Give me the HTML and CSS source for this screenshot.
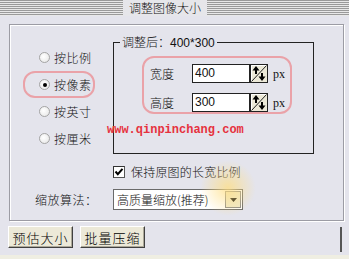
FILE: index.html
```html
<!DOCTYPE html>
<html lang="zh">
<head>
    <meta charset="UTF-8">
    <title>调整图像大小</title>
    <link rel="stylesheet" href="styles.css">
</head>
<body>
    <div class="titlebar"><span class="title">调整图像大小</span></div>

    <div class="panel">
        <div class="panel-top">
            <div class="modes">
                <label class="mode"><span class="radio"></span>按比例</label>
                <label class="mode picked"><span class="radio on"></span>按像素</label>
                <label class="mode"><span class="radio"></span>按英寸</label>
                <label class="mode"><span class="radio"></span>按厘米</label>
            </div>

            <div class="resize-box">
                <span class="legend">调整后：<span class="num">400*300</span></span>
                <div class="dims">
                    <div class="dim-row">
                        <span class="dim-label">宽度</span>
                        <span class="field">400</span>
                        <svg class="spin" width="18" height="19" viewBox="0 0 18 19">
                            <rect x="0.5" y="0.5" width="17" height="18" fill="#ece9d8" stroke="#222"/>
                            <path d="M1.5 17.5 V1.5 H16.5" fill="none" stroke="#fff"/>
                            <line x1="1.5" y1="17.5" x2="16.5" y2="1.5" stroke="#222"/>
                            <path d="M6 2 L2.5 6.5 H5 V10 H7 V6.5 H9.5 Z" fill="#000"/>
                            <path d="M12 17 L8.5 12.5 H11 V9 H13 V12.5 H15.5 Z" fill="#000"/>
                        </svg>
                        <span class="unit">px</span>
                    </div>
                    <div class="dim-row">
                        <span class="dim-label">高度</span>
                        <span class="field">300</span>
                        <svg class="spin" width="18" height="19" viewBox="0 0 18 19">
                            <rect x="0.5" y="0.5" width="17" height="18" fill="#ece9d8" stroke="#222"/>
                            <path d="M1.5 17.5 V1.5 H16.5" fill="none" stroke="#fff"/>
                            <line x1="1.5" y1="17.5" x2="16.5" y2="1.5" stroke="#222"/>
                            <path d="M6 2 L2.5 6.5 H5 V10 H7 V6.5 H9.5 Z" fill="#000"/>
                            <path d="M12 17 L8.5 12.5 H11 V9 H13 V12.5 H15.5 Z" fill="#000"/>
                        </svg>
                        <span class="unit">px</span>
                    </div>
                </div>
                <div class="watermark">www.qinpinchang.com</div>
            </div>
        </div>

        <div class="keep-row">
            <svg class="check" width="12" height="12" viewBox="0 0 12 12">
                <rect x="0.5" y="0.5" width="11" height="11" fill="#fff" stroke="#555"/>
                <path d="M0.5 11.5 V0.5 H11.5" fill="none" stroke="#333"/>
                <path d="M2.5 5.5 L4.8 8.2 L9.5 2.8" fill="none" stroke="#000" stroke-width="2"/>
            </svg>
            <span>保持原图的长宽比例</span>
        </div>

        <div class="algo-row">
            <span class="algo-label">缩放算法：</span>
            <div class="select">
                <span class="select-text">高质量缩放(推荐)</span>
                <span class="select-btn">
                    <svg width="7" height="4" viewBox="0 0 7 4"><path d="M0 0 H7 L3.5 4 Z" fill="#000"/></svg>
                </span>
            </div>
        </div>
    </div>

    <div class="footer">
        <button class="btn">预估大小</button>
        <button class="btn">批量压缩</button>
        <span class="sep"></span>
    </div>
    <div class="statusbar"></div>
</body>
</html>
```

FILE: styles.css
```css
body {
    margin: 0;
    width: 349px;
    height: 259px;
    overflow: hidden;
    background: #e4e4ec;
    font-family: "Noto Sans CJK SC", sans-serif;
    font-size: 12px;
    font-weight: 300;
    line-height: 14px;
    color: #111;
}
.titlebar {
    height: 16px;
    padding-left: 123px;
    background: repeating-linear-gradient(to bottom, #9a9a9a 0 1px, #e8e8e8 1px 2px);
}
.title {
    display: block;
    width: 84px;
    height: 16px;
    line-height: 16px;
    text-align: center;
    background: #e6e6ea;
}
.panel {
    margin: 8px 5px 0 9px;
    height: 197px;
    box-sizing: border-box;
    border: 1px solid #9c9ca4;
    box-shadow: inset 1px 1px #fff, 1px 1px #fff;
}
.panel-top {
    display: flex;
}
.modes {
    width: 103px;
    box-sizing: border-box;
    padding: 19px 0 0 29px;
}
.mode {
    display: flex;
    align-items: center;
    height: 27px;
    letter-spacing: 0.5px;
}
.mode.picked {
    width: 72px;
    margin-left: -16px;
    padding-left: 14px;
    box-sizing: border-box;
    border: 2px solid #eaa2a8;
    border-radius: 12px;
}
.radio {
    width: 11px;
    height: 11px;
    margin-right: 4px;
    border: 1px solid #a4a4a4;
    border-radius: 50%;
    background: radial-gradient(circle at 40% 40%, #fff, #e4e4e4);
    box-sizing: border-box;
    display: flex;
    align-items: center;
    justify-content: center;
}
.radio.on::after {
    content: "";
    width: 4px;
    height: 4px;
    border-radius: 50%;
    background: #000;
}
.resize-box {
    width: 201px;
    height: 112px;
    margin-top: 17px;
    box-sizing: border-box;
    border: 1px solid #222;
}
.legend {
    display: table;
    margin: -8px 0 0 6px;
    padding: 0 2px;
    background: #e4e4ec;
}
.num {
    font-family: "Liberation Sans", sans-serif;
    font-weight: normal;
    font-size: 12px;
}
.dims {
    width: 150px;
    height: 58px;
    margin: 6px 0 0 28px;
    padding: 6px 0 0 6px;
    box-sizing: border-box;
    border: 2px solid #eaa2a8;
    border-radius: 12px;
}
.dim-row {
    display: flex;
    align-items: center;
    height: 19px;
}
.dim-row + .dim-row {
    margin-top: 10px;
}
.dim-label {
    width: 42px;
}
.field {
    width: 58px;
    height: 19px;
    box-sizing: border-box;
    padding-left: 2px;
    border: 1px solid #222;
    background: #fff;
    font-family: "Liberation Sans", sans-serif;
    font-weight: normal;
    font-size: 12px;
    line-height: 17px;
}
.spin {
    display: block;
}
.unit {
    margin-left: 5px;
    font-family: "Liberation Serif", serif;
    font-weight: normal;
    font-size: 12px;
}
.watermark {
    margin: 9px 0 0 -7px;
    font-family: "Liberation Mono", monospace;
    font-size: 12px;
    font-weight: bold;
    color: #e6323e;
    white-space: nowrap;
}
.keep-row {
    display: flex;
    align-items: center;
    height: 14px;
    margin-top: 11px;
    padding-left: 103px;
    letter-spacing: 0.2px;
}
.check {
    display: block;
    margin-right: 6px;
}
.algo-row {
    display: flex;
    align-items: center;
    margin-top: 10px;
}
.algo-label {
    width: 78px;
    padding-left: 25px;
    letter-spacing: 0.5px;
}
.select {
    position: relative;
    display: flex;
    align-items: center;
    width: 130px;
    height: 21px;
    box-sizing: border-box;
    border: 1px solid #6a6a6a;
    background: #fff;
}
.select::after {
    content: "";
    position: absolute;
    left: 86px;
    top: -30px;
    width: 56px;
    height: 56px;
    background: radial-gradient(circle, rgba(255, 222, 130, 0.75), rgba(255, 228, 150, 0) 70%);
    pointer-events: none;
}
.select-text {
    flex: 1;
    padding-left: 3px;
}
.select-btn {
    display: flex;
    align-items: center;
    justify-content: center;
    width: 16px;
    height: 17px;
    margin-right: 1px;
    box-sizing: border-box;
    border: 1px solid #888;
    background: #efe9cc;
}
.footer {
    display: flex;
    align-items: flex-start;
    gap: 7px;
    height: 34px;
    box-sizing: border-box;
    padding: 5px 0 0 8px;
}
.btn {
    width: 65px;
    height: 22px;
    padding: 0;
    border: 1px solid;
    border-color: #fff #404040 #404040 #fff;
    box-shadow: inset -1px -1px #aca899;
    background: #ece9d8;
    font-family: "Noto Sans CJK SC", sans-serif;
    font-size: 13px;
    font-weight: 300;
    letter-spacing: 1px;
    color: #000;
}
.sep {
    width: 2px;
    height: 25px;
    margin: 1px 7px 0 auto;
    background: #555;
}
.statusbar {
    height: 4px;
    background: #efeee2;
}
```
